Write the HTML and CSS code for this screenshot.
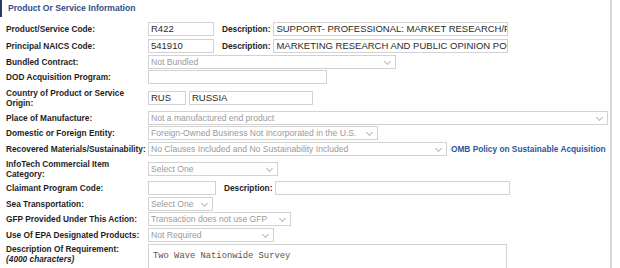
FILE: index.html
```html
<!DOCTYPE html>
<html lang="en">
<head>
  <meta charset="UTF-8">
  <title>Product Or Service Information</title>
  <link rel="stylesheet" href="styles.css">
</head>
<body>
  <div class="panel">
    <div class="panel-title">Product Or Service Information</div>

    <div class="form">
      <!-- codes -->
      <div class="row r-code">
        <label>Product/Service Code:</label>
        <div class="field">
          <span class="box w-code">R422</span>
          <span class="inline-label">Description:</span>
          <span class="box w-desc">SUPPORT- PROFESSIONAL: MARKET RESEARCH/PUBLIC OPINION</span>
        </div>
      </div>
      <div class="row r-code">
        <label>Principal NAICS Code:</label>
        <div class="field">
          <span class="box w-code">541910</span>
          <span class="inline-label">Description:</span>
          <span class="box w-desc">MARKETING RESEARCH AND PUBLIC OPINION POLLING</span>
        </div>
      </div>
      <div class="row">
        <label>Bundled Contract:</label>
        <div class="field"><span class="select w-bundled">Not Bundled</span></div>
      </div>
      <div class="row">
        <label>DOD Acquisition Program:</label>
        <div class="field"><span class="box w-dod"></span></div>
      </div>
      <div class="row tall country">
        <label>Country of Product or Service Origin:</label>
        <div class="field">
          <span class="box w-rus">RUS</span>
          <span class="box w-russia">RUSSIA</span>
        </div>
      </div>
      <div class="row">
        <label>Place of Manufacture:</label>
        <div class="field"><span class="select w-place">Not a manufactured end product</span></div>
      </div>
      <div class="row">
        <label>Domestic or Foreign Entity:</label>
        <div class="field"><span class="select w-entity">Foreign-Owned Business Not Incorporated in the U.S.</span></div>
      </div>
      <div class="row">
        <label>Recovered Materials/Sustainability:</label>
        <div class="field">
          <span class="select w-recovered">No Clauses Included and No Sustainability Included</span>
          <a class="policy" href="#">OMB Policy on Sustainable Acquisition</a>
        </div>
      </div>
      <div class="row tall infotech">
        <label>InfoTech Commercial Item Category:</label>
        <div class="field"><span class="select w-infotech">Select One</span></div>
      </div>
      <div class="row">
        <label>Claimant Program Code:</label>
        <div class="field">
          <span class="box w-claimant"></span>
          <span class="inline-label">Description:</span>
          <span class="box w-desc"></span>
        </div>
      </div>
      <div class="row">
        <label>Sea Transportation:</label>
        <div class="field"><span class="select w-sea">Select One</span></div>
      </div>
      <div class="row">
        <label>GFP Provided Under This Action:</label>
        <div class="field"><span class="select w-gfp">Transaction does not use GFP</span></div>
      </div>
      <div class="row">
        <label>Use Of EPA Designated Products:</label>
        <div class="field"><span class="select w-epa">Not Required</span></div>
      </div>
      <div class="row top">
        <label>Description Of Requirement:<br><em>(4000 characters)</em></label>
        <div class="field"><span class="textarea">Two Wave Nationwide Survey</span></div>
      </div>
    </div>
  </div>
</body>
</html>
```

FILE: styles.css
```css
/* Page */
body {
  margin: 0;
  background: #fff;
  font-family: "Liberation Sans", Arial, sans-serif;
  color: #222;
  overflow: hidden;
}

.panel {
  width: 610px;
  height: 268px;
  border-right: 2px solid #d6d6d6;
  overflow: hidden;
}

.panel-title {
  height: 17px;
  line-height: 17px;
  padding-left: 6px;
  border-left: 2px solid #2c3a63;
  color: #2f4f8a;
  font-weight: bold;
  font-size: 8.6px;
}

/* Form rows */
.form {
  padding: 3px 0 0 6px;
}

.row {
  display: grid;
  grid-template-columns: 142px 1fr;
  align-items: center;
  min-height: 15.5px;
}

.row.r-code {
  min-height: 17px;
}

.row.tall {
  min-height: 23px;
}

.row.country {
  min-height: 25px;
}

.row.infotech {
  min-height: 24px;
}

.row.top {
  align-items: start;
  padding-top: 1px;
}

.row label {
  font-weight: bold;
  font-size: 8.3px;
  line-height: 10px;
  color: #1e1e1e;
}

.field {
  display: flex;
  align-items: center;
  gap: 3px;
}

.inline-label {
  font-weight: bold;
  font-size: 8.3px;
  margin: 0 0 0 5px;
}

/* Inputs */
.box,
.select,
.textarea {
  box-sizing: border-box;
  height: 14px;
  line-height: 12px;
  border: 1px solid #d2d2d2;
  padding: 0 2px;
  white-space: nowrap;
  overflow: hidden;
  background: #fff;
}

.box {
  font-size: 9.5px;
  color: #2a2a2a;
}

.select {
  position: relative;
  font-size: 8.6px;
  color: #9a9a9a;
  padding-right: 14px;
}

.select::after {
  content: "";
  position: absolute;
  right: 5px;
  top: 3px;
  width: 4px;
  height: 4px;
  border-right: 1px solid #b8b8b8;
  border-bottom: 1px solid #b8b8b8;
  transform: rotate(45deg);
}

.textarea {
  width: 359px;
  height: 30px;
  padding: 5px 4px;
  font-family: "Liberation Mono", "Courier New", monospace;
  font-size: 8.8px;
  color: #555;
}

.policy {
  margin-left: 1px;
  font-size: 8.3px;
  font-weight: bold;
  color: #2c55a0;
  text-decoration: none;
}

/* Widths */
.w-code { width: 66px; }
.w-desc { width: 235px; }
.w-claimant { width: 68px; }
.w-bundled { width: 248px; }
.w-dod { width: 179px; }
.w-rus { width: 38px; }
.w-russia { width: 124px; }
.w-place { width: 460px; }
.w-entity { width: 230px; }
.w-recovered { width: 299px; }
.w-infotech { width: 130px; }
.w-sea { width: 65px; }
.w-gfp { width: 143px; }
.w-epa { width: 126px; }
```
